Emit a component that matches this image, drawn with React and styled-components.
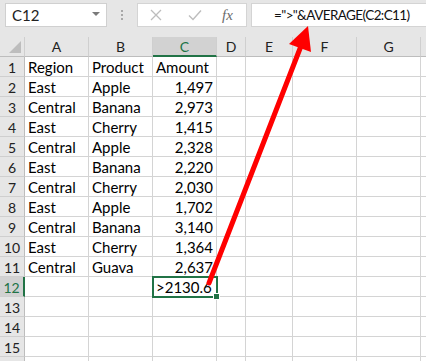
import styled, { createGlobalStyle } from "styled-components";

const GlobalStyle = createGlobalStyle`
  html, body { margin: 0; padding: 0; background: #fff; }
  body { font-family: Lato, "Liberation Sans", sans-serif; }
`;

const cols = ["A", "B", "C", "D", "E", "F", "G", "H"];
const widths = "25px 64px 64px 64px 29px 47px 64px 64px 64px";

const data = [
  ["Region", "Product", "Amount"],
  ["East", "Apple", "1,497"],
  ["Central", "Banana", "2,973"],
  ["East", "Cherry", "1,415"],
  ["Central", "Apple", "2,328"],
  ["East", "Banana", "2,220"],
  ["Central", "Cherry", "2,030"],
  ["East", "Apple", "1,702"],
  ["Central", "Banana", "3,140"],
  ["East", "Cherry", "1,364"],
  ["Central", "Guava", "2,637"],
  ["", "", ">2130.6"],
  ["", "", ""],
  ["", "", ""],
  ["", "", ""],
  ["", "", ""],
];

function App() {
  return (
    <Page>
      <GlobalStyle />
      <TopBar>
        <NameBox>
          <span>C12</span>
          <Caret />
        </NameBox>
        <Grip>
          <i /><i /><i />
        </Grip>
        <FuncBox>
          <svg width="12" height="12" viewBox="0 0 12 12">
            <path d="M1 1 L11 11 M11 1 L1 11" stroke="#bdbdbd" strokeWidth="1.3" />
          </svg>
          <svg width="14" height="12" viewBox="0 0 14 12">
            <path d="M1 6.5 L5 10.5 L13 1.5" stroke="#bdbdbd" strokeWidth="1.4" fill="none" />
          </svg>
          <Fx>fx</Fx>
        </FuncBox>
        <FormulaBox>="&gt;"&amp;AVERAGE(C2:C11)</FormulaBox>
      </TopBar>
      <Sheet>
        <Corner>
          <svg width="12" height="12" viewBox="0 0 12 12">
            <polygon points="12,0 12,12 0,12" fill="#bdbdbd" />
          </svg>
        </Corner>
        {cols.map((c) => (
          <ColHead key={c} $active={c === "C"}>{c}</ColHead>
        ))}
        {data.map((row, r) => (
          <Row key={r} r={r} row={row} />
        ))}
      </Sheet>
      <Arrow width="426" height="361" viewBox="0 0 426 361">
        <line x1="209" y1="283" x2="301" y2="46" stroke="#ff0000" strokeWidth="5" strokeLinecap="round" />
        <polygon points="308,26 311,52 289,44" fill="#ff0000" />
      </Arrow>
    </Page>
  );
}

function Row({ r, row }) {
  const n = r + 1;
  return (
    <>
      <RowHead $active={n === 12}>{n}</RowHead>
      {cols.map((c, i) => {
        const v = row[i] || "";
        const num = i === 2 && r > 0 && r < 11;
        const sel = n === 12 && c === "C";
        return (
          <Cell key={c} $num={num} $sel={sel}>
            {v}
            {sel && <Handle />}
          </Cell>
        );
      })}
    </>
  );
}

const Page = styled.div`
  position: relative;
  width: 426px;
  height: 361px;
  overflow: hidden;
  background: #fff;
`;

const TopBar = styled.div`
  height: 37px;
  background: #e6e6e6;
  display: flex;
  align-items: flex-start;
  padding-top: 3px;
  box-sizing: border-box;
  padding-left: 5px;
`;

const NameBox = styled.div`
  flex: 0 0 102px;
  height: 24px;
  box-sizing: border-box;
  background: #fff;
  border: 1px solid #d0d0d0;
  display: flex;
  align-items: center;
  justify-content: space-between;
  padding: 0 6px 0 6px;
  font-size: 15px;
  color: #222;
`;

const Caret = styled.span`
  width: 0;
  height: 0;
  border-left: 4px solid transparent;
  border-right: 4px solid transparent;
  border-top: 4px solid #7a7a7a;
  margin-top: -2px;
`;

const Grip = styled.div`
  flex: 0 0 30px;
  height: 24px;
  display: flex;
  flex-direction: column;
  align-items: center;
  justify-content: center;
  gap: 2px;
  i {
    width: 2px;
    height: 2px;
    background: #a8a8a8;
  }
`;

const FuncBox = styled.div`
  flex: 0 0 110px;
  height: 24px;
  box-sizing: border-box;
  background: #fff;
  border: 1px solid #d4d4d4;
  display: flex;
  align-items: center;
  padding-left: 12px;
  svg:first-child { margin-right: 26px; }
  svg:nth-child(2) { margin-right: 20px; }
`;

const Fx = styled.span`
  font-family: "Liberation Serif", serif;
  font-style: italic;
  font-size: 15px;
  color: #6b6b6b;
`;

const FormulaBox = styled.div`
  flex: 1 1 auto;
  min-width: 0;
  height: 24px;
  margin-left: 4px;
  box-sizing: border-box;
  background: #fff;
  border: 1px solid #d4d4d4;
  border-right: none;
  font-size: 13.5px;
  letter-spacing: -0.6px;
  line-height: 22px;
  padding-left: 22px;
  color: #111;
  white-space: nowrap;
`;

const Sheet = styled.div`
  display: grid;
  grid-template-columns: ${widths};
  grid-auto-rows: 20px;
  font-size: 15px;
`;

const Corner = styled.div`
  background: #e6e6e6;
  border-right: 1px solid #cfcfcf;
  border-bottom: 1px solid #bdbdbd;
  box-sizing: border-box;
  display: flex;
  align-items: flex-end;
  justify-content: flex-end;
  padding: 0 3px 3px 0;
`;

const ColHead = styled.div`
  box-sizing: border-box;
  background: ${(p) => (p.$active ? "#d2d2d2" : "#e6e6e6")};
  border-right: 1px solid #cfcfcf;
  border-bottom: ${(p) => (p.$active ? "2px solid #217346" : "1px solid #bdbdbd")};
  color: ${(p) => (p.$active ? "#217346" : "#222")};
  text-align: center;
  font-size: 14px;
  line-height: 19px;
`;

const RowHead = styled.div`
  box-sizing: border-box;
  background: ${(p) => (p.$active ? "#d2d2d2" : "#e6e6e6")};
  border-bottom: 1px solid #cfcfcf;
  border-right: ${(p) => (p.$active ? "2px solid #217346" : "1px solid #bdbdbd")};
  color: ${(p) => (p.$active ? "#217346" : "#222")};
  text-align: center;
  font-size: 14px;
  line-height: 21px;
`;

const Cell = styled.div`
  position: relative;
  box-sizing: border-box;
  border-right: 1px solid #d4d4d4;
  border-bottom: 1px solid #d4d4d4;
  padding: 0 3px;
  line-height: 21px;
  white-space: nowrap;
  color: #000;
  text-align: ${(p) => (p.$num ? "right" : "left")};
  ${(p) =>
    p.$sel &&
    `
    outline: 2px solid #217346;
    outline-offset: -1px;
    z-index: 1;
  `}
`;

const Handle = styled.span`
  position: absolute;
  right: -4px;
  bottom: -4px;
  width: 5px;
  height: 5px;
  background: #217346;
  border: 1px solid #fff;
`;

const Arrow = styled.svg`
  position: absolute;
  left: 0;
  top: 0;
  pointer-events: none;
  z-index: 5;
`;

export default App;
